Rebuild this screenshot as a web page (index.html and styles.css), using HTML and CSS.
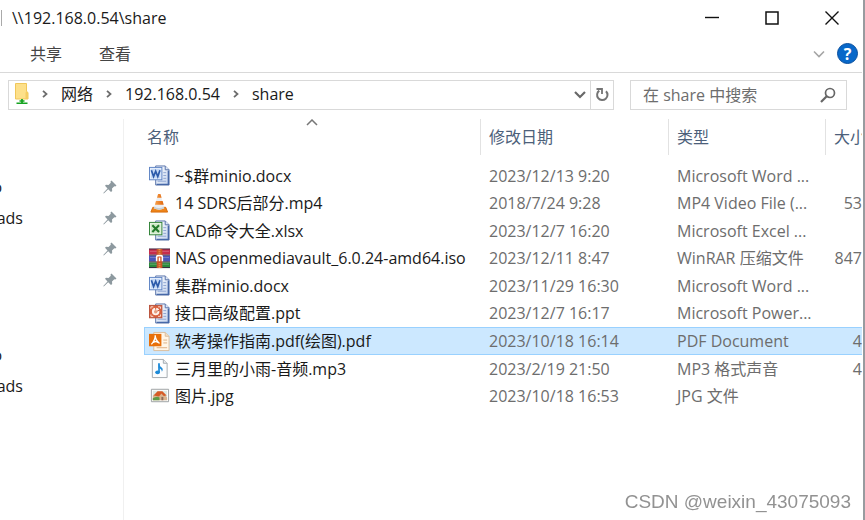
FILE: index.html
```html
<!DOCTYPE html>
<html lang="zh-CN">
<head>
<meta charset="utf-8">
<title>\\192.168.0.54\share</title>
<link rel="stylesheet" href="styles.css">
</head>
<body>
<svg class="defs" aria-hidden="true">
  <defs>
    <linearGradient id="page" x1="0" y1="0" x2="1" y2="1"><stop offset="0" stop-color="#fff"/><stop offset="1" stop-color="#c3d3ee"/></linearGradient>
    <linearGradient id="cone" x1="0" y1="0" x2="1" y2="0"><stop offset="0" stop-color="#f9a04a"/><stop offset="1" stop-color="#e0660c"/></linearGradient>
  </defs>
  <symbol id="sheet" viewBox="0 0 22 22">
    <path d="M7 1h10l4 4v16H7z" fill="url(#page)" stroke="#5872a8"/>
    <path d="M17 1v4h4" fill="#dfe8f8" stroke="#5872a8"/>
    <path d="M20.300 6v14.300H8" fill="none" stroke="#4668a8" stroke-width="1.500"/>
    <path d="M15 8h3M15 11h3M15 14h3M9 17h9" stroke="#8fa6d2"/>
  </symbol>
  <symbol id="word" viewBox="0 0 22 22">
    <use href="#sheet"/>
    <rect x=".5" y="2.500" width="13" height="13" fill="#e9f1fd" stroke="#5d83c4"/>
    <rect x="2" y="4" width="10" height="10" fill="#c5d9f6"/>
    <path d="M2.500 5.500 4.800 12 7 6.500 9.200 12 11.500 5.500" fill="none" stroke="#2c5aaa" stroke-width="1.800"/>
  </symbol>
  <symbol id="excel" viewBox="0 0 22 22">
    <use href="#sheet"/>
    <rect x=".5" y="2.500" width="13" height="13" fill="#eaf6e6" stroke="#2f8135"/>
    <rect x="2" y="4" width="10" height="10" fill="#cfe9c8"/>
    <path d="M3.500 5.500 10.500 12.500M10.500 5.500 3.500 12.500" stroke="#237a2b" stroke-width="2.200"/>
  </symbol>
  <symbol id="ppt" viewBox="0 0 22 22">
    <use href="#sheet"/>
    <rect x=".5" y="2.500" width="13" height="13" fill="#d9603c" stroke="#b8523c"/>
    <path d="M2 6V4h2.500M9.500 4H12v2M12 12v2H9.500M4.500 14H2v-2" fill="none" stroke="#fbe1d5"/>
    <circle cx="7" cy="9" r="3.900" fill="#fff3ec"/>
    <path d="M7 7V4.500M8.500 8.500 11 7.500" stroke="#c94f2c"/>
    <circle cx="7" cy="9.200" r="1.800" fill="#e5a183"/>
  </symbol>
  <symbol id="vlc" viewBox="0 0 22 22">
    <path d="M4 15 2 20h17.500L17.500 15z" fill="#ee8418" stroke="#d86c0c"/>
    <path d="M9.500 1h2.500L16 16q-5 3-11 0z" fill="#eceef0"/>
    <path d="M9.500 1h2.500l1.200 4H8.400zM7.300 8.500h7l1.100 3.700H6.200z" fill="url(#cone)"/>
    <path d="M5 16q5.500 3 11 0l-.4-1.500q-5 2.500-10.200 0z" fill="#c9d0d6"/>
  </symbol>
  <symbol id="rar" viewBox="0 0 22 22">
    <path d="M0 1h22v6H0z" fill="#c62c4c"/><path d="M0 8h22v6H0z" fill="#4a55b8"/><path d="M0 15h22v6H0z" fill="#2b8a3d"/>
    <path d="M0 1h22M0 7.500h22M0 14.500h22M0 20.500h22" stroke="#37263f"/>
    <path d="M1 3.500h20M1 10h20M1 17h20" stroke="#fff" stroke-opacity=".25"/>
    <path d="M8 1h6v20H8z" fill="#cb5426"/>
    <path d="M11 1v6M11 16v5" stroke="#e99a50" stroke-width="2" stroke-dasharray="1 1"/>
    <path d="M8 14V9.500Q8 8 9.500 8h3Q14 8 14 9.500V14M11 10v4" fill="none" stroke="#fff" stroke-width="1.600"/>
  </symbol>
  <symbol id="pdf" viewBox="0 0 22 22">
    <path d="M5 1.500h12l4 4v15H5z" fill="#fff6e8" stroke="#d9bd9c"/>
    <path d="M17 1.500v4h4" fill="#f4dfc3" stroke="#d9bd9c"/>
    <path d="M15 9.500h4M15 12.500h4M8 17.500h11" stroke="#dcae80"/>
    <path d="M0 3h13v13H0z" fill="#e8700a"/>
    <path d="M6.500 4.500Q7 9 2.500 14M6.500 4.500Q6.500 9 11 13M4.500 12Q7 10 9.500 12" fill="none" stroke="#fff" stroke-width="1.400"/>
  </symbol>
  <symbol id="music" viewBox="0 0 22 22">
    <path d="M3.500 1.500H15l4 4v15H3.500z" fill="#fcfdfe" stroke="#a3a9ae"/>
    <path d="M15 1.500v4h4" fill="#e8ecef" stroke="#a3a9ae"/>
    <path d="M10.500 5.500v9.500" stroke="#1d8ad8" stroke-width="1.800"/>
    <path d="M10 5.500q1 3 3.200 4.500t.3 4.500q0-3-3.500-4z" fill="#1d8ad8"/>
    <ellipse cx="9" cy="15" rx="2.500" ry="2" fill="#1d8ad8"/>
  </symbol>
  <symbol id="image" viewBox="0 0 22 22">
    <path d="M2.500 4.500h18v13h-18z" fill="#fff" stroke="#9b9fa2"/>
    <path d="M4 6h15v10H4z" fill="#dce9e3"/>
    <path d="M4 11l5-4 5 1 5 5v3H4z" fill="#d9b38e"/>
    <path d="M5 11 9 6.500h5L18.500 11l-3 .5L13 9l-2.500 3z" fill="#d55b26"/>
    <path d="M4 14q4-3 7-1v3H4z" fill="#5f9b47"/>
    <path d="M13 12.500h2V16h-2z" fill="#8b6a57"/>
  </symbol>
  <symbol id="pin" viewBox="0 0 14 14">
    <path d="M8.500.5 13.500 5.500 12.300 6.500 11.300 6.200 9 8.500 9.200 11 8 12 5.200 9.300.8 13.500.3 13 4.500 8.500 2 5.800 3 4.800 5.500 5 7.800 2.800 7.500 1.500z" fill="#8d999f"/>
  </symbol>
  <symbol id="crumb" viewBox="0 0 6 8"><path d="M1 .8 4.500 4 1 7.200" fill="none" stroke="#6c6c6c" stroke-width="1.800"/></symbol>
</svg>

<div class="window">
  <header class="titlebar">
    <h1 class="title">\\192.168.0.54\share</h1>
    <div class="controls">
      <button type="button" aria-label="最小化"><svg width="14" height="14" viewBox="0 0 14 14"><path d="M0 6.500h14" stroke="#111" stroke-width="1.400"/></svg></button>
      <button type="button" aria-label="最大化"><svg width="14" height="14" viewBox="0 0 14 14"><path d="M1 1h12v12H1z" fill="none" stroke="#111" stroke-width="1.500"/></svg></button>
      <button type="button" aria-label="关闭"><svg width="14" height="14" viewBox="0 0 14 14"><path d="M.5.5 13.500 13.500M13.500.5.5 13.500" stroke="#111" stroke-width="1.400"/></svg></button>
    </div>
  </header>

  <div class="ribbon">
    <button type="button" class="tab">共享</button>
    <button type="button" class="tab">查看</button>
    <button type="button" class="expand" aria-label="展开功能区"><svg width="12" height="8" viewBox="0 0 12 8"><path d="M1 1.500 6 6.500 11 1.500" fill="none" stroke="#a5a5a5" stroke-width="1.600"/></svg></button>
    <button type="button" class="help" aria-label="帮助">?</button>
  </div>

  <div class="locationbar">
    <div class="address">
      <nav class="crumbs">
        <svg width="14" height="22" viewBox="0 0 14 22"><path d="M.5.5h11v8l1.500 1v6.500H.5z" fill="#fde08a" stroke="#f0c75a"/><path d="M10.500 10q0-1.500 1.200-1.500T13 10v6h-2.500z" fill="#f4cc62"/><path d="M7 16v4.500" stroke="#28ad31" stroke-width="2"/><path d="M4.500 18h5M1.500 20.300h11" stroke="#16a322" stroke-width="1.600"/></svg>
        <svg width="6" height="8"><use href="#crumb"/></svg>
        <a href="#network">网络</a>
        <svg width="6" height="8"><use href="#crumb"/></svg>
        <a href="#host">192.168.0.54</a>
        <svg width="6" height="8"><use href="#crumb"/></svg>
        <a href="#share">share</a>
      </nav>
      <button type="button" class="history" aria-label="以前的位置"><svg width="12" height="8" viewBox="0 0 12 8"><path d="M1 1 6 6 11 1" fill="none" stroke="#686868" stroke-width="2.200"/></svg></button>
      <button type="button" class="refresh" aria-label="刷新"><svg width="14" height="16" viewBox="0 0 14 16"><path d="M11 4.200A5.200 5.200 0 1 1 4.300 3.600" fill="none" stroke="#747474" stroke-width="2"/><path d="M1.500 2h5.500v5" fill="none" stroke="#747474" stroke-width="1.800"/></svg></button>
    </div>
    <form class="search">
      <input type="search" aria-label="搜索" placeholder="在 share 中搜索">
      <button type="button" aria-label="搜索"><svg width="16" height="16" viewBox="0 0 16 16"><circle cx="10" cy="6" r="4.500" fill="none" stroke="#666" stroke-width="1.700"/><path d="M6.700 9.300 1 15" stroke="#666" stroke-width="2.200"/></svg></button>
    </form>
  </div>

  <div class="body">
    <aside class="sidebar">
      <ul class="quick">
        <li><span class="edge">o</span><svg width="14" height="14"><use href="#pin"/></svg></li>
        <li><span>ads</span><svg width="14" height="14"><use href="#pin"/></svg></li>
        <li><svg width="14" height="14"><use href="#pin"/></svg></li>
        <li><svg width="14" height="14"><use href="#pin"/></svg></li>
      </ul>
      <ul class="places">
        <li><span class="edge">o</span></li>
        <li><span>ads</span></li>
      </ul>
    </aside>
    <main class="files">
      <table>
        <colgroup><col><col class="col-date"><col class="col-type"><col class="col-size"></colgroup>
        <thead>
          <tr>
            <th class="sorted">名称<svg class="sort" width="12" height="7" viewBox="0 0 12 7"><path d="M1 6 6 1 11 6" fill="none" stroke="#777" stroke-width="1.500"/></svg></th>
            <th>修改日期</th><th>类型</th><th>大小</th>
          </tr>
        </thead>
        <tbody>
          <tr><td><div class="file"><svg><use href="#word"/></svg>~$群minio.docx</div></td><td>2023/12/13 9:20</td><td>Microsoft Word ...</td><td></td></tr>
          <tr><td><div class="file"><svg><use href="#vlc"/></svg>14 SDRS后部分.mp4</div></td><td>2018/7/24 9:28</td><td>MP4 Video File (...</td><td>53</td></tr>
          <tr><td><div class="file"><svg><use href="#excel"/></svg>CAD命令大全.xlsx</div></td><td>2023/12/7 16:20</td><td>Microsoft Excel ...</td><td></td></tr>
          <tr><td><div class="file"><svg><use href="#rar"/></svg>NAS openmediavault_6.0.24-amd64.iso</div></td><td>2023/12/11 8:47</td><td>WinRAR 压缩文件</td><td>847</td></tr>
          <tr><td><div class="file"><svg><use href="#word"/></svg>集群minio.docx</div></td><td>2023/11/29 16:30</td><td>Microsoft Word ...</td><td></td></tr>
          <tr><td><div class="file"><svg><use href="#ppt"/></svg>接口高级配置.ppt</div></td><td>2023/12/7 16:17</td><td>Microsoft Power...</td><td></td></tr>
          <tr class="selected"><td><div class="file"><svg><use href="#pdf"/></svg>软考操作指南.pdf(绘图).pdf</div></td><td>2023/10/18 16:14</td><td>PDF Document</td><td>4</td></tr>
          <tr><td><div class="file"><svg><use href="#music"/></svg>三月里的小雨-音频.mp3</div></td><td>2023/2/19 21:50</td><td>MP3 格式声音</td><td>4</td></tr>
          <tr><td><div class="file"><svg><use href="#image"/></svg>图片.jpg</div></td><td>2023/10/18 16:53</td><td>JPG 文件</td><td></td></tr>
        </tbody>
      </table>
    </main>
  </div>
</div>
<p class="watermark">CSDN @weixin_43075093</p>
</body>
</html>
```
FILE: styles.css
```css
* { box-sizing: border-box; }
body {
  margin: 0;
  background: #fff;
  color: #1a1a1a;
  font: 16px/24px "Open Sans", "Noto Sans CJK SC", sans-serif;
}
.defs { position: absolute; width: 0; height: 0; }
svg { display: block; flex: none; }
button { border: 0; padding: 0; background: none; font: inherit; color: inherit; display: grid; place-items: center; }
a { color: inherit; text-decoration: none; }
ul { list-style: none; margin: 0; padding: 0; }

.window {
  min-height: 100vh;
  display: flex;
  flex-direction: column;
  border-right: 2px solid #989b9f;
  padding-right: 1px;
  overflow: hidden;
}
.titlebar { display: flex; align-items: center; justify-content: space-between; height: 35px; padding-left: 1px; }
.title { margin: 0; padding-left: 10px; border-left: 1px solid #aaa; font-size: 16px; font-weight: 400; line-height: 16px; }
.controls { display: flex; }
.controls button { width: 60px; height: 34px; }

.ribbon { display: flex; align-items: center; height: 38px; padding: 0 4px 0 30px; border-bottom: 1px solid #d9d9d9; color: #444; }
.tab { margin-right: 37px; }
.expand { margin-left: auto; margin-right: 12px; }
.help { width: 21px; height: 21px; border: 1px solid #0a4f9e; border-radius: 50%; background: #0868c9; color: #fff; font-weight: 700; line-height: 18px; }

.locationbar { display: flex; gap: 16px; padding: 7px 15px 0 8px; }
.address { display: flex; flex: 1; height: 30px; border: 1px solid #d9d9d9; }
.crumbs { display: flex; align-items: center; flex: 1; gap: 13px; padding: 0 0 2px 6px; }
.history { width: 20px; }
.refresh { width: 23px; border-left: 1px solid #d9d9d9; }
.search { display: flex; width: 217px; height: 30px; border: 1px solid #d9d9d9; }
.search input { flex: 1; min-width: 0; border: 0; padding: 0 0 0 12px; font: inherit; background: none; outline: 0; }
.search input::placeholder { color: #6d6d6d; opacity: 1; }
.search button { width: 36px; }

.body { display: flex; flex: 1; padding-top: 9px; }
.sidebar { flex: none; width: 124px; border-right: 1px solid #f0f0f0; padding-top: 52px; }
.sidebar li { display: flex; align-items: center; height: 31px; }
.sidebar li span { display: flex; justify-content: flex-end; width: 23px; overflow: hidden; }
.sidebar li .edge { width: 2px; }
.sidebar li svg { margin-left: auto; margin-right: 6px; }
.places { padding-top: 44px; }

.files { flex: 1; min-width: 0; padding-left: 20px; }
table { width: 100%; table-layout: fixed; border-collapse: separate; border-spacing: 0; }
.col-date { width: 188px; }
.col-type { width: 157px; }
.col-size { width: 37px; }
th { position: relative; height: 36px; padding: 0 0 0 8px; border-left: 1px solid #e2e2e2; text-align: left; font-weight: 400; color: #4c607a; white-space: nowrap; overflow: hidden; }
th.sorted { padding-left: 3px; border-left: 0; }
.sort { position: absolute; top: 0; left: 0; right: 0; margin: 0 auto; }
thead::after { content: ""; display: block; height: 7px; }
td { height: 27px; padding: 0 0 0 9px; color: #6d6d6d; line-height: 24px; white-space: nowrap; }
tr:nth-child(even) td { height: 28px; }
td:first-child { padding-left: 5px; color: #1a1a1a; }
td:last-child { padding: 0; text-align: right; }
.file { display: flex; align-items: center; gap: 5px; }
.file svg { width: 21px; height: 21px; }
tbody .selected td { height: 28px; background: #cce8ff; border: solid #99d1ff; border-width: 1px 0; }
tbody .selected td:first-child { border-left-width: 1px; padding-left: 4px; }
tbody .selected ~ tr td { height: 27px; }

.watermark { position: fixed; right: 14px; bottom: 6px; margin: 0; color: #929292; font: 19px/24px "Liberation Sans", sans-serif; }
```
